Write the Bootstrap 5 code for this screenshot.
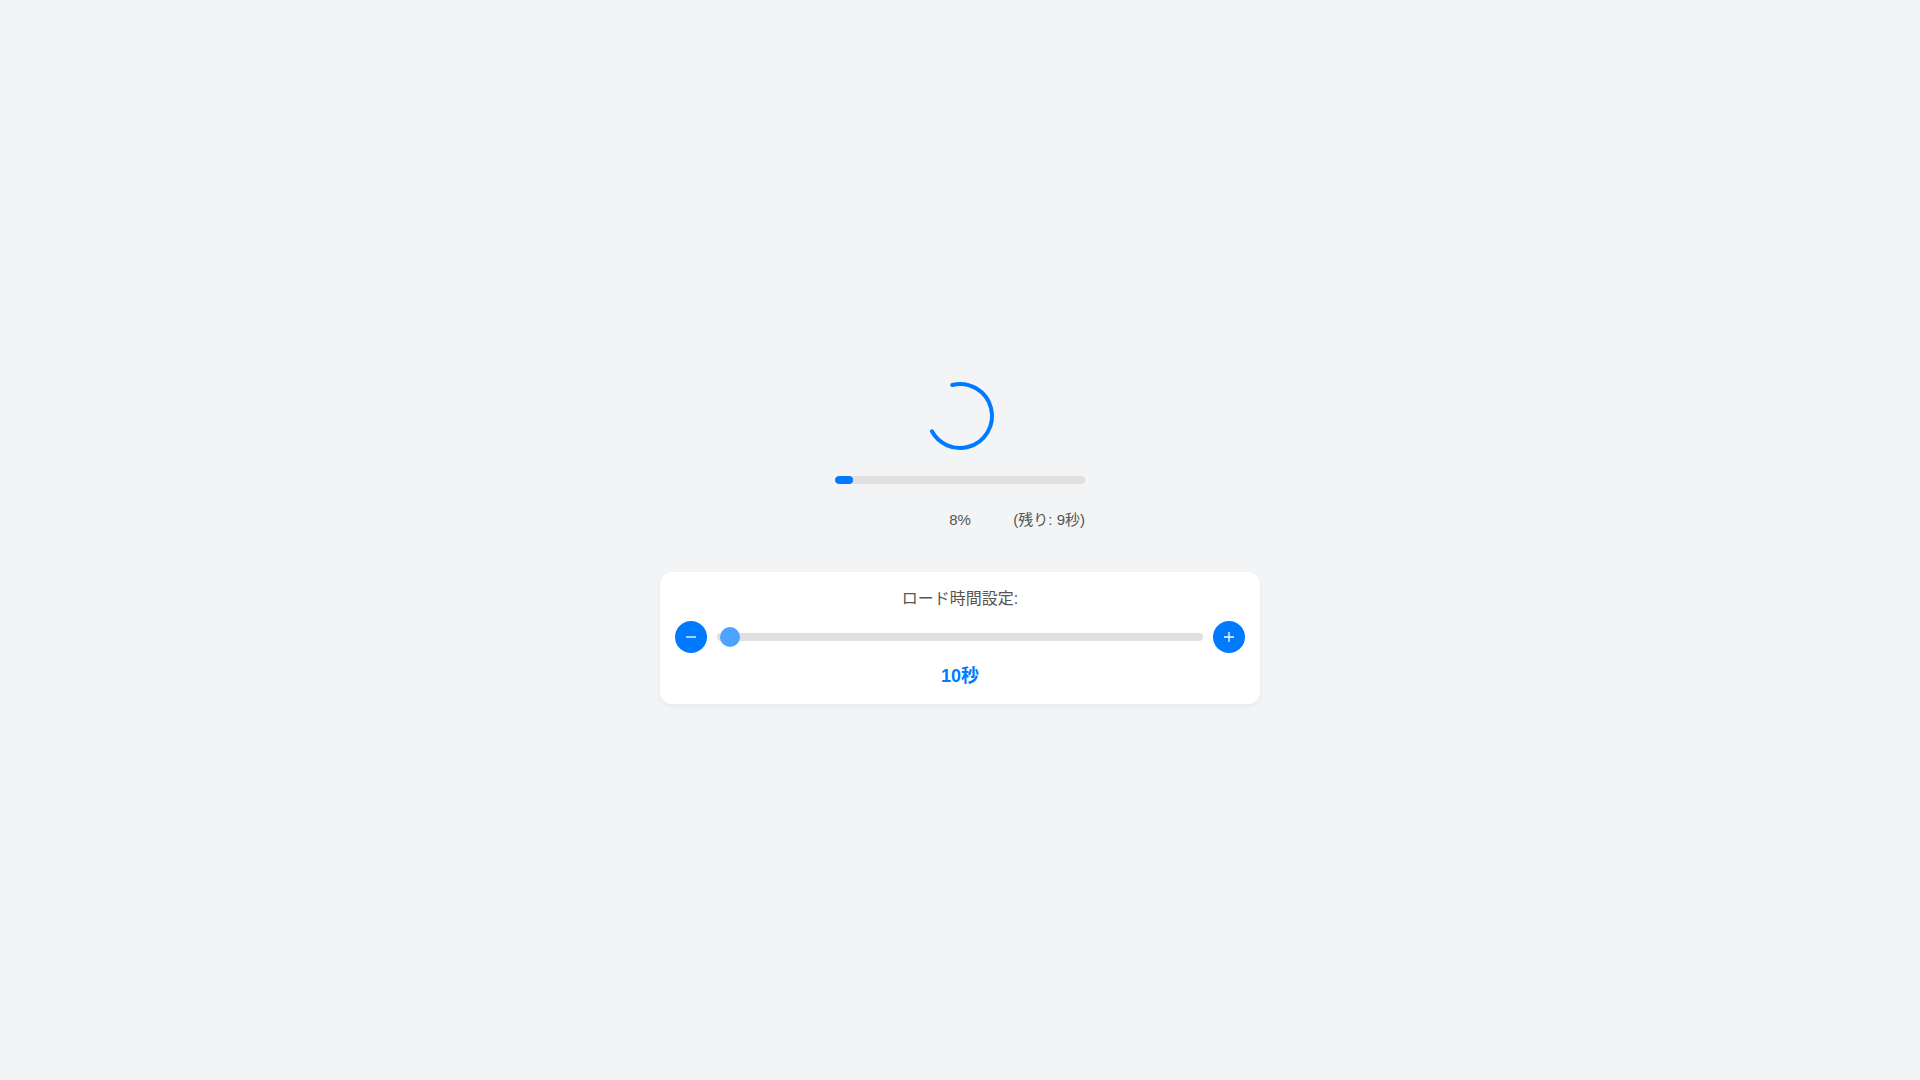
<!DOCTYPE html>
<html lang="ja">
<head>
<meta charset="utf-8">
<meta name="viewport" content="width=device-width, initial-scale=1">
<title>ロード時間設定</title>
<link href="https://cdn.jsdelivr.net/npm/bootstrap@5.3.0/dist/css/bootstrap.min.css" rel="stylesheet">
<style>
  body { background: #f3f4f6; font-family: "Liberation Sans", sans-serif, "Noto Sans CJK JP", sans-serif; font-size: 16px; line-height: 24px; color: #555; }
  .loader { max-width: 250px; }
  .load-bar { --bs-progress-height: 8px; --bs-progress-bg: #e0e0e0; --bs-progress-border-radius: 4px; --bs-progress-bar-bg: #007bff; margin-top: 20px; }
  .load-bar .progress-bar { border-radius: 4px; }
  .load-status { margin-top: 24px; font-size: 15px; }
  .settings { max-width: 600px; margin-top: 40px; padding: 15px; border-radius: 12px; box-shadow: 0 2px 5px rgba(0, 0, 0, .05); gap: 10px; }
  .settings-title { color: #555; }
  .slider-row { gap: 10px; }
  .step-btn { width: 32px; height: 32px; background: #007bff; color: #fff; }
  .step-btn:hover { background: #0069d9; color: #fff; }
  .time-slider { appearance: none; -webkit-appearance: none; min-width: 0; height: 8px; border-radius: 4px; background: #e0e0e0; }
  .time-slider::-webkit-slider-thumb { -webkit-appearance: none; width: 20px; height: 20px; border-radius: 50%; background: #4da3ff; cursor: pointer; }
  .time-slider::-moz-range-thumb { width: 20px; height: 20px; border: 0; border-radius: 50%; background: #4da3ff; }
  .time-value { color: #007bff; font-size: 18px; line-height: 26px; }
</style>
<script src="https://cdn.jsdelivr.net/npm/bootstrap@5.3.0/dist/js/bootstrap.bundle.min.js" defer></script>
</head>
<body>
<main class="d-flex flex-column align-items-center justify-content-center min-vh-100">
  <section class="loader w-100 d-flex flex-column">
    <svg class="align-self-center" width="80" height="80" viewBox="25 25 50 50" fill="none" role="img" aria-label="読み込み中">
      <circle cx="50" cy="50" r="20" transform="rotate(-104 50 50)" stroke="#007bff" stroke-width="2.5" stroke-linecap="round" stroke-dasharray="89 200"/>
    </svg>
    <div class="progress load-bar" role="progressbar" aria-label="進行状況" aria-valuenow="8" aria-valuemin="0" aria-valuemax="100">
      <div class="progress-bar" style="width: 7.2%"></div>
    </div>
    <div class="row g-0 load-status">
      <span class="col-4 offset-4 text-center">8%</span>
      <span class="col-4 text-end text-nowrap">(残り: 9秒)</span>
    </div>
  </section>
  <section class="settings w-100 bg-white d-flex flex-column">
    <label class="settings-title text-center" for="loadTime">ロード時間設定:</label>
    <div class="slider-row d-flex align-items-center">
      <button class="btn step-btn rounded-circle border-0 p-0 d-flex align-items-center justify-content-center" type="button" aria-label="減らす">
        <svg width="12" height="12" viewBox="0 0 12 12" stroke="currentColor" stroke-width="1.3"><path d="M1 6H11"/></svg>
      </button>
      <input class="time-slider flex-fill" type="range" id="loadTime" min="0" max="1500" value="10">
      <button class="btn step-btn rounded-circle border-0 p-0 d-flex align-items-center justify-content-center" type="button" aria-label="増やす">
        <svg width="12" height="12" viewBox="0 0 12 12" stroke="currentColor" stroke-width="1.3"><path d="M1 6H11M6 1V11"/></svg>
      </button>
    </div>
    <output class="time-value fw-bold text-center" for="loadTime">10秒</output>
  </section>
</main>
</body>
</html>
